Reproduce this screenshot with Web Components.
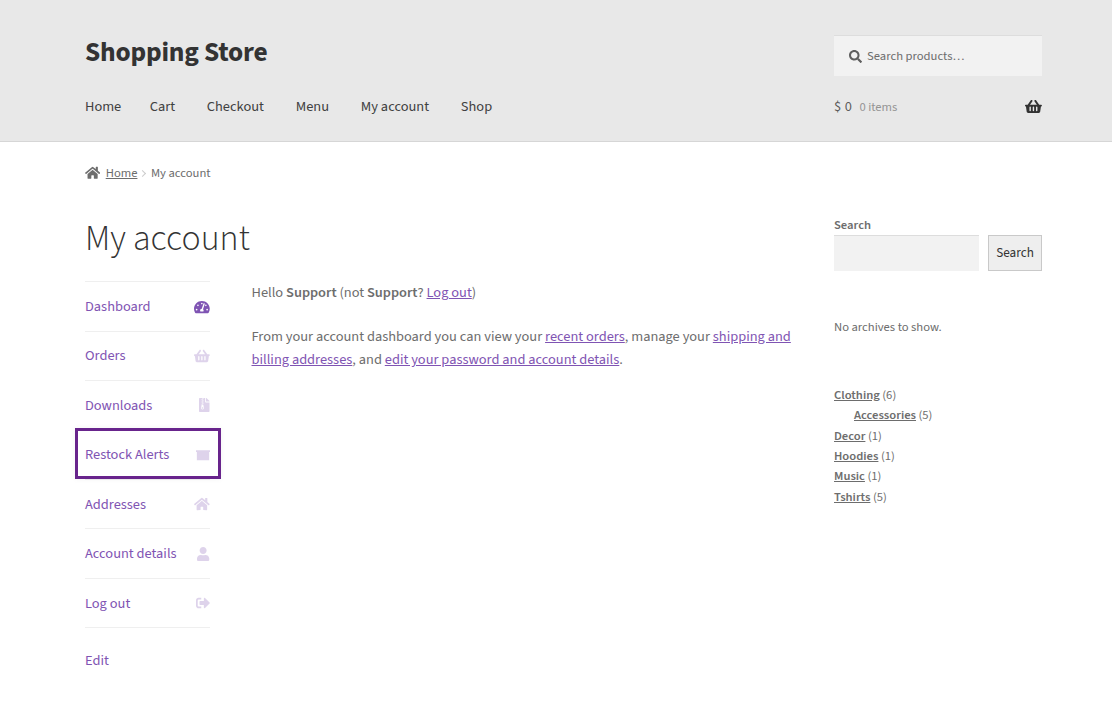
<!doctype html>
<html><head><meta charset="utf-8"><title>My account</title>
<style>
html,body{margin:0;padding:0;background:#fff}
body{font-family:'Source Sans Pro','Source Sans 3',Lato,sans-serif;font-size:14.4px;line-height:1.618;color:#6d6d6d}
</style></head><body>
<store-header></store-header>
<store-page>
  <store-breadcrumb></store-breadcrumb>
  <account-layout></account-layout>
</store-page>
<script>
const P={
search:[512,"M505 442.7L405.3 343c-4.5-4.5-10.6-7-17-7H372c27.6-35.3 44-79.7 44-128C416 93.1 322.9 0 208 0S0 93.1 0 208s93.1 208 208 208c48.3 0 92.7-16.4 128-44v16.3c0 6.4 2.5 12.5 7 17l99.7 99.7c9.4 9.4 24.6 9.4 33.9 0l28.3-28.3c9.4-9.4 9.4-24.6.1-34zM208 336c-70.7 0-128-57.2-128-128 0-70.7 57.2-128 128-128 70.7 0 128 57.2 128 128 0 70.7-57.2 128-128 128z"],
user:[448,"M224 256c70.7 0 128-57.3 128-128S294.7 0 224 0 96 57.3 96 128s57.3 128 128 128zm89.6 32h-16.7c-22.2 10.2-46.9 16-72.9 16s-50.6-5.8-72.9-16h-16.7C60.2 288 0 348.2 0 422.4V464c0 26.5 21.5 48 48 48h352c26.5 0 48-21.5 48-48v-41.6c0-74.2-60.2-134.4-134.4-134.4z"],
home:[576,"M280.37 148.26L96 300.11V464a16 16 0 0 0 16 16l112.06-.29a16 16 0 0 0 15.92-16V368a16 16 0 0 1 16-16h64a16 16 0 0 1 16 16v95.64a16 16 0 0 0 16 16.05L464 480a16 16 0 0 0 16-16V300L295.67 148.26a12.19 12.19 0 0 0-15.3 0zM571.6 251.47L488 182.56V44.05a12 12 0 0 0-12-12h-56a12 12 0 0 0-12 12v72.61L318.47 43a48 48 0 0 0-61 0L4.34 251.47a12 12 0 0 0-1.6 16.9l25.5 31A12 12 0 0 0 45.15 301l235.22-193.74a12.19 12.19 0 0 1 15.3 0L530.9 301a12 12 0 0 0 16.9-1.6l25.5-31a12 12 0 0 0-1.7-16.93z"],
basket:[576,"M576 216v16c0 13.255-10.745 24-24 24h-8l-26.113 182.788C514.509 462.435 494.257 480 470.37 480H105.63c-23.887 0-44.139-17.565-47.518-41.212L32 256h-8c-13.255 0-24-10.745-24-24v-16c0-13.255 10.745-24 24-24h67.341l106.78-146.821c10.395-14.292 30.407-17.453 44.701-7.058 14.293 10.395 17.453 30.408 7.058 44.701L170.477 192h235.046L326.12 82.821c-10.395-14.292-7.234-34.306 7.059-44.701 14.291-10.395 34.306-7.235 44.701 7.058L484.659 192H552c13.255 0 24 10.745 24 24zM312 392V280c0-13.255-10.745-24-24-24s-24 10.745-24 24v112c0 13.255 10.745 24 24 24s24-10.745 24-24zm112 0V280c0-13.255-10.745-24-24-24s-24 10.745-24 24v112c0 13.255 10.745 24 24 24s24-10.745 24-24zm-224 0V280c0-13.255-10.745-24-24-24s-24 10.745-24 24v112c0 13.255 10.745 24 24 24s24-10.745 24-24z"],
signout:[512,"M497 273L329 441c-15 15-41 4.5-41-17v-96H152c-13.3 0-24-10.7-24-24v-96c0-13.3 10.7-24 24-24h136V88c0-21.4 25.9-32 41-17l168 168c9.3 9.4 9.3 24.6 0 34zM192 436v-40c0-6.6-5.4-12-12-12H96c-17.7 0-32-14.3-32-32V160c0-17.7 14.3-32 32-32h84c6.6 0 12-5.4 12-12V76c0-6.6-5.4-12-12-12H96c-53 0-96 43-96 96v192c0 53 43 96 96 96h84c6.6 0 12-5.4 12-12z"],
gauge:[576,"M288 32C128.94 32 0 160.94 0 320c0 52.8 14.25 102.26 39.06 144.8 5.61 9.62 16.3 15.2 27.44 15.2h443c11.14 0 21.83-5.58 27.44-15.2C561.75 422.26 576 372.8 576 320c0-159.06-128.94-288-288-288zm0 64c14.71 0 26.58 10.13 30.32 23.65-1.11 2.26-2.64 4.23-3.45 6.67l-9.22 27.67c-5.13 3.49-10.97 6.01-17.64 6.01-17.67 0-32-14.33-32-32S270.33 96 288 96zM96 384c-17.67 0-32-14.33-32-32s14.33-32 32-32 32 14.33 32 32-14.33 32-32 32zm48-160c-17.67 0-32-14.33-32-32s14.33-32 32-32 32 14.33 32 32-14.33 32-32 32zm246.77-72.41l-61.33 184C343.13 347.33 352 364.54 352 384c0 11.72-3.38 22.55-8.88 32H232.88c-5.5-9.45-8.88-20.28-8.88-32 0-33.94 26.5-61.43 59.9-63.59l61.34-184.01c4.17-12.56 17.73-19.45 30.36-15.17 12.57 4.19 19.35 17.79 15.17 30.36zm14.66 57.2l15.52-46.55c3.47-1.29 7.13-2.23 11.05-2.23 17.67 0 32 14.33 32 32s-14.33 32-32 32c-11.38-.01-20.89-6.28-26.57-15.22zM480 384c-17.67 0-32-14.33-32-32s14.33-32 32-32 32 14.33 32 32-14.33 32-32 32z"],
archive:[384,"M377 105L279.1 7c-4.5-4.5-10.6-7-17-7H256v128h128v-6.1c0-6.3-2.5-12.4-7-16.9zM128.4 336c-17.9 0-32.4 12.1-32.4 27 0 15 14.6 27 32.5 27s32.4-12.1 32.4-27-14.6-27-32.5-27zM224 136V0h-63.6v32h-32V0H24C10.7 0 0 10.7 0 24v464c0 13.3 10.7 24 24 24h336c13.3 0 24-10.7 24-24V160H248c-13.2 0-24-10.8-24-24zM95.9 32h32v32h-32zm32.3 384c-33.2 0-58-30.4-51.4-62.9L96.4 256v-32h32v-32h-32v-32h32v-32h-32V96h32V64h32v32h-32v32h32v32h-32v32h32v32h-32v32h22.1c5.7 0 10.7 4.1 11.8 9.7l17.3 87.7c6.4 32.4-18.4 62.6-51.4 62.6z"],
box:[512,"M0 84h512v64H0zM32 148h448v300H32z"]
};
customElements.define('fa-icon',class extends HTMLElement{
  connectedCallback(){
    const [w,d]=P[this.getAttribute('name')];
    const r=this.attachShadow({mode:'open'});
    r.innerHTML=`<style>:host{display:inline-block;line-height:0;height:var(--h,14px);width:calc(var(--h,14px)*${w}/512);flex:none}svg{display:block;width:100%;height:100%;fill:currentColor}</style><svg viewBox="0 0 ${w} 512" aria-hidden="true"><path d="${d}"/></svg>`;
  }
});
customElements.define('store-header',class extends HTMLElement{
  constructor(){super();this.attachShadow({mode:'open'}).innerHTML=`<style>
  :host{display:block;background:#e8e8e8;border-bottom:1px solid #d6d6d6;height:140.5px}
  .wrap{width:957px;margin-left:85px;display:flex;flex-direction:column}
  .top{display:flex;justify-content:space-between;align-items:flex-start;padding-top:35px;height:56px}
  .title{font-size:27.4px;font-weight:700;color:#333;line-height:32px;letter-spacing:-.2px;margin-top:2px}
  .search{width:208px;height:41px;box-sizing:border-box;background:#f2f2f2;border-top:1px solid #ddd;display:flex;align-items:center;gap:5.5px;padding-left:14.5px;font-size:12.6px;color:#6d6d6d;line-height:1}
  .search fa-icon{--h:13px;color:#5f5f5f}
  .bottom{display:flex;justify-content:space-between;height:24px;align-items:center;margin-top:4px}
  nav{display:flex;gap:31.8px;color:#404040;font-size:14.4px}
  nav .second{margin-left:-3.4px}
  .cart{width:208px;display:flex;align-items:center;color:#6d6d6d;font-size:14.4px}
  .cart .amt{color:#5a5a5a;letter-spacing:.4px}
  .cart .cnt{font-size:12.6px;color:#949494;margin-left:7px}
  .cart fa-icon{margin-left:auto;--h:15px;color:#333}
  </style><div class="wrap"><div class="top"><div class="title">Shopping Store</div><div class="search"><fa-icon name="search"></fa-icon><span>Search products…</span></div></div>
  <div class="bottom"><nav><span>Home</span><span class="second">Cart</span><span>Checkout</span><span>Menu</span><span>My account</span><span>Shop</span></nav>
  <div class="cart"><span class="amt">$ 0</span><span class="cnt">0 items</span><fa-icon name="basket"></fa-icon></div></div></div>`;}
});
customElements.define('store-page',class extends HTMLElement{
  constructor(){super();this.attachShadow({mode:'open'}).innerHTML=`<style>:host{display:block;width:957px;margin-left:85px}</style><slot></slot>`;}
});
customElements.define('store-breadcrumb',class extends HTMLElement{
  constructor(){super();this.attachShadow({mode:'open'}).innerHTML=`<style>
  :host{display:flex;align-items:center;height:20px;margin-top:21.5px;font-size:12.6px;color:#6d6d6d}
  fa-icon{--h:13.5px;margin-right:5.5px;color:#6d6d6d}
  a{color:#6d6d6d;text-decoration:underline}
  .sep{display:inline-block;width:4px;height:4px;border-top:1px solid #ccc;border-right:1px solid #ccc;transform:rotate(45deg);margin:0 6px 0 2.5px}
  </style><fa-icon name="home"></fa-icon><a>Home</a><span class="sep"></span><span>My account</span>`;}
});
customElements.define('nav-item',class extends HTMLElement{
  constructor(){super();
    const a=this.getAttribute('active')!==null;
    this.attachShadow({mode:'open'}).innerHTML=`<style>
    :host{display:flex;align-items:center;justify-content:space-between;position:relative;padding:12.6px 0;line-height:23.22px;border-bottom:1px solid #efefef;color:#7f54b3}
    :host([focused])::after{content:"";position:absolute;left:-10px;right:-11px;top:-2.6px;bottom:0;border:3px solid #68248c;box-shadow:0 0 6px rgba(0,0,0,.05)}
    .ic{color:#7f54b3;opacity:${a?1:.25};display:flex;--h:var(--ih,14px)}
    </style><slot></slot><span class="ic"><fa-icon name="${this.getAttribute('icon')}"></fa-icon></span>`;}
});
customElements.define('account-nav',class extends HTMLElement{
  constructor(){super();this.attachShadow({mode:'open'}).innerHTML=`<style>
  :host{display:block;width:124.5px;border-top:1px solid #efefef;flex:none}
  .edit{display:block;margin-top:21px;color:#7f54b3}
  </style>
  <nav-item icon="gauge" active>Dashboard</nav-item>
  <nav-item icon="basket">Orders</nav-item>
  <nav-item icon="archive">Downloads</nav-item>
  <nav-item icon="box" focused>Restock Alerts</nav-item>
  <nav-item icon="home">Addresses</nav-item>
  <nav-item icon="user">Account details</nav-item>
  <nav-item icon="signout" style="padding-top:13.1px;padding-bottom:12.1px">Log out</nav-item>
  <span class="edit">Edit</span>`;}
});
customElements.define('store-sidebar',class extends HTMLElement{
  constructor(){super();this.attachShadow({mode:'open'}).innerHTML=`<style>
  :host{display:block;width:208px;flex:none;font-size:12.6px;line-height:20.39px;color:#6d6d6d;margin-left:42px;padding-top:1px}
  .lab{font-weight:600;color:#6d6d6d;display:block}
  .row{display:flex;justify-content:space-between}
  .inp{width:145px;height:36px;box-sizing:border-box;background:#f2f2f2;border-top:1px solid #ddd}
  .btn{width:54px;height:36px;box-sizing:border-box;background:#eeeeee;border:1px solid #c9c9c9;color:#333;font-size:13.2px;display:flex;align-items:center;justify-content:center}
  .arch{margin-top:46px}
  ul{list-style:none;margin:47px 0 0;padding:0}
  ul ul{margin:0;padding-left:20px}
  a{font-weight:600;text-decoration:underline;color:#6d6d6d}
  </style><span class="lab">Search</span>
  <div class="row"><div class="inp"></div><div class="btn">Search</div></div>
  <div class="arch">No archives to show.</div>
  <ul><li><a>Clothing</a> (6)<ul><li><a>Accessories</a> (5)</li></ul></li><li><a>Decor</a> (1)</li><li><a>Hoodies</a> (1)</li><li><a>Music</a> (1)</li><li><a>Tshirts</a> (5)</li></ul>`;}
});
customElements.define('account-layout',class extends HTMLElement{
  constructor(){super();this.attachShadow({mode:'open'}).innerHTML=`<style>
  :host{display:flex;align-items:flex-start;margin-top:31px}
  main{width:707px;flex:none}
  h1{font-size:35.8px;font-weight:300;color:#333;margin:0;line-height:48px;height:66.35px;padding-top:1px}
  .cols{display:flex;gap:42px}
  .txt{width:540px;color:#6d6d6d;font-size:14.4px}
  p{margin:0 0 21px;line-height:23px}
  a{color:#7f54b3;text-decoration:underline}
  b{font-weight:600}
  </style><main><h1>My account</h1><div class="cols"><account-nav></account-nav><div class="txt">
  <p>Hello <b>Support</b> (not <b>Support</b>? <a>Log out</a>)</p>
  <p>From your account dashboard you can view your <a>recent orders</a>, manage your <a>shipping and</a> <a>billing addresses</a>, and <a>edit your password and account details</a>.</p>
  </div></div></main><store-sidebar></store-sidebar>`;}
});
</script>
</body></html>
